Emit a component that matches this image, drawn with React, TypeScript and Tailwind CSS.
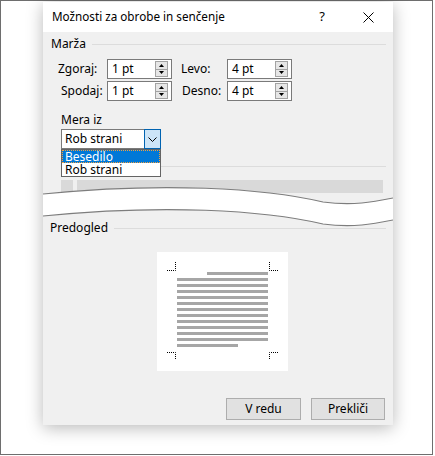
import React from "react";

const Spinner = () => (
  <div className="w-[13px] h-[16px] border border-[#a3a3a3] bg-[#e6e6e6] flex flex-col">
    <div className="flex-1 flex items-center justify-center border-b border-[#a3a3a3]">
      <svg width="5" height="3" viewBox="0 0 5 3"><path d="M0 3 L2.5 0 L5 3 Z" fill="#000" /></svg>
    </div>
    <div className="flex-1 flex items-center justify-center">
      <svg width="5" height="3" viewBox="0 0 5 3"><path d="M0 0 L2.5 3 L5 0 Z" fill="#000" /></svg>
    </div>
  </div>
);

const NumField = ({ value }: { value: string }) => (
  <div className="w-[65px] h-[20px] border border-[#7a7a7a] bg-white flex items-center justify-between pl-[4px] pr-[3px]">
    <span>{value}</span>
    <Spinner />
  </div>
);

const GroupHeader = ({ label, className }: { label: string; className?: string }) => (
  <div className={"flex items-center pr-[7px] leading-[16px] " + (className ?? "")}>
    <span>{label}</span>
    <div className="flex-1 h-px bg-[#dcdcdc] ml-[6px]" />
  </div>
);

export default function App() {
  const lines = Array.from({ length: 11 });

  return (
    <div className="w-[435px] h-[456px] bg-white font-['Noto_Sans',sans-serif] text-[12px] text-black">
      <div className="w-[433px] h-[455px] border border-[#6e6e6e] pt-px pl-[42px]">
        {/* dialog */}
        <div className="w-[350px] h-[423px] flex flex-col shadow-[0_3px_16px_rgba(0,0,0,0.28)]">
          {/* title bar */}
          <div className="h-[30px] bg-white flex items-center pl-[9px] shrink-0">
            <span className="text-[11.7px]">Možnosti za obrobe in senčenje</span>
            <span className="ml-auto mr-[38px] text-[13px]">?</span>
            <svg width="11" height="11" viewBox="0 0 11 11" className="mr-[19px]">
              <path d="M0.5 0.5 L10.5 10.5 M10.5 0.5 L0.5 10.5" stroke="#000" strokeWidth="1" />
            </svg>
          </div>

          {/* body */}
          <div className="flex-1 bg-[#f0f0f0] relative flex flex-col">
            <GroupHeader label="Marža" className="pt-[4px] pl-[8px]" />

            <div className="flex flex-col gap-[2px] mt-[7px] pl-[15px]">
              <div className="flex items-center">
                <span className="w-[49px]">Zgoraj:</span>
                <NumField value="1 pt" />
                <span className="w-[55px] pl-[9px]">Levo:</span>
                <NumField value="4 pt" />
              </div>
              <div className="flex items-center">
                <span className="w-[49px] pl-[3px]">Spodaj:</span>
                <NumField value="1 pt" />
                <span className="w-[55px] pl-[10px]">Desno:</span>
                <NumField value="4 pt" />
              </div>
            </div>

            <div className="mt-[11px] pl-[18px] leading-[16px]">Mera iz</div>

            {/* combobox */}
            <div className="mt-[1px] ml-[18px] w-[100px] h-[20px] border border-[#7a7a7a] bg-white flex items-center">
              <span className="pl-[3px] flex-1">Rob strani</span>
              <div className="w-[17px] h-[20px] -mr-px border border-[#0063b1] bg-[#cce4f7] flex items-center justify-center">
                <svg width="9" height="5" viewBox="0 0 9 5">
                  <path d="M0.5 0.5 L4.5 4.5 L8.5 0.5" stroke="#000" strokeWidth="1" fill="none" />
                </svg>
              </div>
            </div>

            {/* dropdown list */}
            <div className="absolute left-[18px] top-[117px] w-[100px] border border-[#646464] bg-white z-10 leading-[13px]">
              <div className="h-[13px] bg-[#0078d7] text-white border border-dotted border-[#f0a040] pl-[2px] flex items-center">Besedilo</div>
              <div className="h-[13px] pl-[3px] flex items-center">Rob strani</div>
            </div>

            <div className="mt-[17px] ml-[18px] mr-[7px] h-px bg-[#dcdcdc]" />

            <div className="mt-[13px] ml-[18px] flex gap-[4px] h-[13px]">
              <div className="w-[12px] bg-[#d9d9d9]" />
              <div className="w-[306px] bg-[#d9d9d9]" />
            </div>

            {/* torn-paper gap */}
            <svg width="350" height="44" viewBox="0 0 350 44" className="-mt-[9px] block">
              <path
                d="M0 10 C120 -2 220 4 280 18 C310 22 330 18 350 14 L350 36 C330 40 310 44 280 40 C220 26 120 20 0 32 Z"
                fill="#fff"
              />
              <path d="M0 10 C120 -2 220 4 280 18 C310 22 330 18 350 14" stroke="#7d7d7d" strokeWidth="1.2" fill="none" />
              <path d="M0 32 C120 20 220 26 280 40 C310 44 330 40 350 36" stroke="#7d7d7d" strokeWidth="1.2" fill="none" />
            </svg>

            <GroupHeader label="Predogled" className="-mt-[8px] pl-[7px]" />

            {/* preview page */}
            <div className="mt-[16px] ml-[114px] w-[131px] h-[119px] bg-white relative pt-[20px] pl-[20px] flex flex-col gap-[3px]">
              <div className="ml-[30px] w-[61px] h-[3px] bg-[#a6a6a6]" />
              {lines.map((_, i) => (
                <div key={i} className="w-[91px] h-[3px] bg-[#a6a6a6]" />
              ))}
              <div className="w-[61px] h-[3px] bg-[#a6a6a6]" />
              <svg width="131" height="119" viewBox="0 0 131 119" className="absolute inset-0">
                <g stroke="#000" strokeWidth="1" strokeDasharray="1 1" fill="none">
                  <path d="M10 18.5 H18.5 V10" />
                  <path d="M121 18.5 H112.5 V10" />
                  <path d="M10 100.5 H18.5 V108" />
                  <path d="M121 100.5 H112.5 V108" />
                </g>
              </svg>
            </div>

            <div className="mt-[27px] flex justify-end gap-[10px] pr-[8px]">
              <button className="w-[75px] h-[22px] bg-[#e1e1e1] border border-[#adadad]">V redu</button>
              <button className="w-[74px] h-[22px] bg-[#e1e1e1] border border-[#adadad]">Prekliči</button>
            </div>
          </div>
        </div>
      </div>
    </div>
  );
}
